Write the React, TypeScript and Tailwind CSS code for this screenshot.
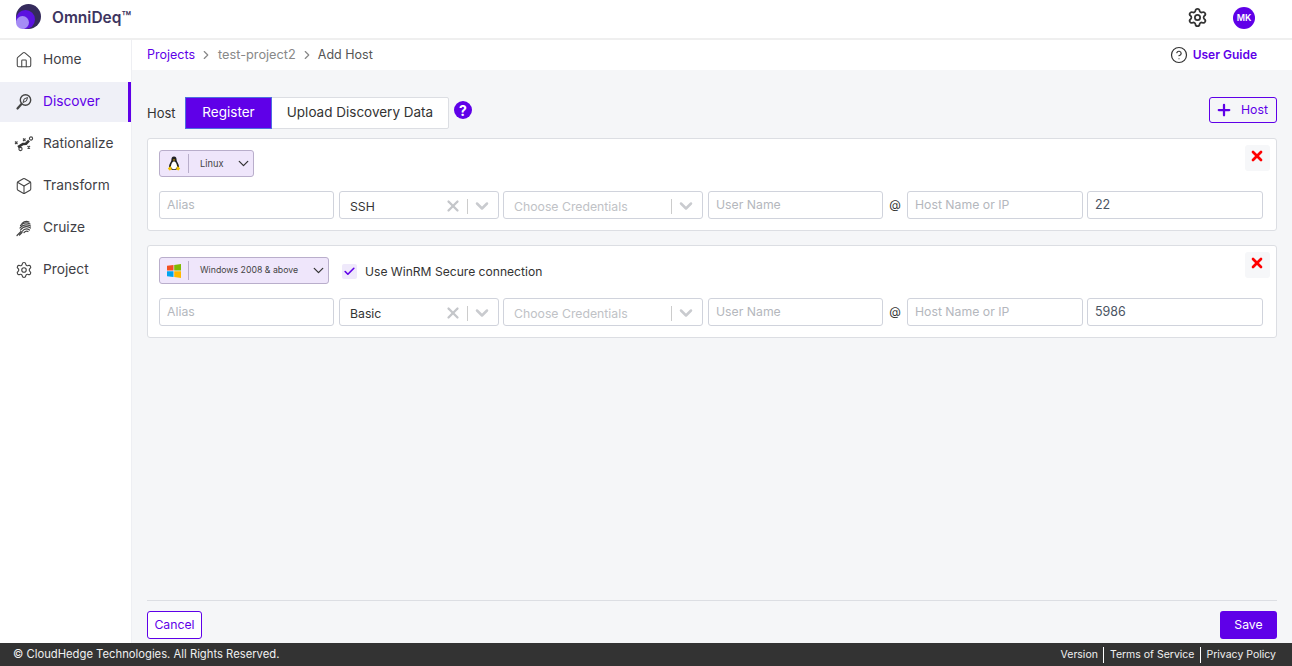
import React from "react";
import { Home, Box, Settings, Check, X, ChevronDown, ChevronRight, Plus, CircleHelp } from "lucide-react";

const font = "font-['Inter','Noto_Sans',sans-serif]";

function DiscoverIcon() {
  return (
    <svg width="18" height="18" viewBox="0 0 18 18" fill="none" stroke="#444" strokeWidth="1.4">
      <circle cx="10.500" cy="7" r="5.200" />
      <path d="M8 9.500l3.400-1.600 1.200-3.400-3.400 1.400z" strokeWidth="1" />
      <path d="M6.500 11L2.500 15.500" strokeWidth="2.200" strokeLinecap="round" />
    </svg>
  );
}
function RationalizeIcon() {
  return (
    <svg width="20" height="16" viewBox="0 0 20 16" fill="none" stroke="#444" strokeWidth="1.100">
      <path d="M1 5.500l2.500 2.500M3.500 5.500L1 8M9 2.500l2.500 2.500M11.500 2.500L9 5M13.500 10l2.500 2.500M16 10l-2.500 2.500" />
      <circle cx="17" cy="2.500" r="1.600" />
      <circle cx="6.500" cy="13" r="1.600" />
      <path d="M4 11.200L9 8l3-.3 3-3" stroke="#333" strokeWidth="2.600" />
    </svg>
  );
}
function CruizeIcon() {
  return (
    <svg width="18" height="18" viewBox="0 0 18 18" fill="none" stroke="#444" strokeWidth="1.200" strokeLinecap="round">
      <path d="M7 4.500C9 2.500 12 2 14 3" />
      <path d="M5.500 6.500C8 4 12 3.500 15 5" />
      <path d="M5 9C7 6 11.500 5 15.500 7" />
      <path d="M5.500 11C8 7.800 12 7 15.500 9" />
      <path d="M7 12.500C9 10 12 9.300 14.500 11" />
      <path d="M9 13.500C10.500 12 12 11.800 13 12.500" />
      <path d="M2 16.500l4-4M4.500 16l2.500-2.500" />
    </svg>
  );
}
function TuxIcon() {
  return (
    <svg width="14" height="15" viewBox="0 0 14 15">
      <path d="M7 .5C5 .5 4.300 2.200 4.400 4.200 4.300 5.800 2 7.800 2 10.500c0 1.800 1.500 3.500 5 3.500s5-1.700 5-3.500c0-2.700-2.300-4.700-2.400-6.300C9.700 2.200 9 .5 7 .5z" fill="#222" />
      <path d="M7 5.500c-1.800 0-3 2.800-3 4.800s1.300 3 3 3 3-1 3-3-1.200-4.800-3-4.800z" fill="#fff" />
      <path d="M5.800 3.600h2.400L7 5z" fill="#eab308" />
      <path d="M.8 12.500L3.500 10l1.500 3.500-2.500 1zM13.200 12.500L10.500 10 9 13.500l2.500 1z" fill="#f5c400" />
    </svg>
  );
}
function WinIcon() {
  return (
    <svg width="14" height="14" viewBox="0 0 14 14">
      <path d="M0 1.800L6.500 1v5.600H0z" fill="#f25022" />
      <path d="M7.200 .9L14 0v6.600H7.200z" fill="#7fba00" />
      <path d="M0 7.300h6.500V13L0 12.200z" fill="#00a4ef" />
      <path d="M7.200 7.300H14V14l-6.800-.9z" fill="#ffb900" />
    </svg>
  );
}

const nav = [
  { label: "Home", icon: <Home size={18} strokeWidth={1.4} color="#444" /> },
  { label: "Discover", icon: <DiscoverIcon />, active: true },
  { label: "Rationalize", icon: <RationalizeIcon /> },
  { label: "Transform", icon: <Box size={18} strokeWidth={1.4} color="#444" /> },
  { label: "Cruize", icon: <CruizeIcon /> },
  { label: "Project", icon: <Settings size={18} strokeWidth={1.5} color="#444" /> },
];

function Text({ ph, value, w }: { ph?: string; value?: string; w: string }) {
  return (
    <div className={`${w} h-7 rounded-[3px] border border-[#d0d3dc] bg-white px-[7px] flex items-center text-[12.250px] ${value ? "text-[#4b5563] text-[12.500px]" : "text-[#b4b7bd]"}`}>
      <span>{value ?? ph}</span>
    </div>
  );
}

function Sel({ value, ph, clear, w }: { value?: string; ph?: string; clear?: boolean; w: string }) {
  return (
    <div className={`${w} h-7 rounded-[3px] border border-[#d0d3dc] bg-white flex items-center pl-[10px] text-[12.250px]`}>
      <span className={`flex-1 pt-1 ${value ? "text-[#333]" : "text-[#c0c2c6]"}`}>{value ?? ph}</span>
      {clear && <X size={18} strokeWidth={3} color="#c4c6ca" className="mr-[5px] mt-0.5" />}
      <div className="w-px h-[15px] bg-[#ccc] mt-0.5" />
      <ChevronDown size={20} strokeWidth={3} color="#c9cbcf" className="ml-[4px] mr-[6px] mt-0.5" />
    </div>
  );
}

function Row({ type, port }: { type: string; port: string }) {
  return (
    <div className="flex items-center mt-[14px]">
      <Text ph="Alias" w="w-[175px]" />
      <div className="w-[5px]" />
      <Sel value={type} clear w="w-[160px]" />
      <div className="w-1" />
      <Sel ph="Choose Credentials" w="w-[200px]" />
      <div className="w-[5px]" />
      <Text ph="User Name" w="w-[175px]" />
      <div className="w-[24px] text-center text-[12px] text-[#333]">@</div>
      <Text ph="Host Name or IP" w="w-[176px]" />
      <div className="w-1" />
      <Text value={port} w="w-[176px]" />
    </div>
  );
}

function RemoveBtn() {
  return (
    <div className="absolute right-[6px] top-[6px] w-[25px] h-[26px] rounded-[3px] bg-[#f6f7f9] flex items-center justify-center pr-px">
      <X size={16} strokeWidth={4} color="#ff0000" className="-mt-[4px]" />
    </div>
  );
}

function OsSel({ icon, label, w, labelW, size }: { icon: React.ReactNode; label: string; w: string; labelW: string; size: string }) {
  return (
    <div className={`${w} h-[27px] rounded-[3px] border border-[#b9aecb] bg-[#efe6fb] flex items-center`}>
      <div className="w-[29px] h-[19px] border-r border-[#b9aecb] flex items-center justify-center shrink-0">{icon}</div>
      <div className={`${labelW} ${size} pl-[11px] text-[#444] whitespace-nowrap`}>{label}</div>
      <ChevronDown size={17} strokeWidth={1.800} color="#333" className="shrink-0" />
    </div>
  );
}

export default function App() {
  return (
    <div className={`${font} w-[1292px] h-[666px] overflow-hidden flex flex-col bg-white`}>
      <header className="h-10 shrink-0 flex items-center border-b-2 border-[#efefef] pl-4 pr-[37px]">
        <svg width="25" height="25" viewBox="0 0 25 25" className="-mt-[5px]">
          <circle cx="12.500" cy="12.500" r="12.500" fill="#352b5c" />
          <circle cx="9.500" cy="15.500" r="9.500" fill="#5b12e0" />
          <circle cx="6.500" cy="18.500" r="6.500" fill="#a58cf5" />
        </svg>
        <span className="ml-[11px] text-[15.500px] font-semibold text-[#3d3560] -mt-[2px]">OmniDeq™</span>
        <div className="flex-1" />
        <Settings size={21} strokeWidth={2} color="#333" className="-mt-[4px]" />
        <div className="ml-[25px] w-[22px] h-[22px] rounded-full bg-[#5f00e8] text-white text-[9px] font-semibold flex items-center justify-center -mt-[2px]">MK</div>
      </header>

      <div className="flex-1 flex min-h-0">
        <aside className="w-[132px] shrink-0 border-r border-[#eeeff3] bg-white">
          {nav.map((n) => (
            <div key={n.label} className={`h-10 mb-0.5 flex items-center pl-[14px] ${n.active ? "bg-[#eff0f7] border-r-[3px] border-[#5f00e8] text-[#5f00e8]" : "text-[#3f3f46]"}`}>
              <span className="w-[20px] flex justify-center shrink-0">{n.icon}</span>
              <span className="ml-[9px] text-[13.750px] -mt-0.5">{n.label}</span>
            </div>
          ))}
        </aside>

        <main className="flex-1 min-w-0 flex flex-col bg-[#f5f6f8]">
          <div className="h-[30px] shrink-0 bg-white flex items-center pl-[15px] pr-[35px] text-[12.500px]">
            <span className="text-[#5f00e8]">Projects</span>
            <ChevronRight size={14} strokeWidth={2} color="#888" className="ml-1 mr-[5px]" />
            <span className="text-[#888] text-[12.750px]">test-project2</span>
            <ChevronRight size={14} strokeWidth={2} color="#888" className="ml-1 mr-[4px]" />
            <span className="text-[#555]">Add Host</span>
            <div className="flex-1" />
            <CircleHelp size={18} strokeWidth={1.600} color="#333" />
            <span className="ml-[5px] text-[#5f00e8] font-semibold text-[12px]">User Guide</span>
          </div>

          <div className="flex-1 flex flex-col px-[15px] pt-[27px] min-h-0">
            <div className="flex items-start h-[41px]">
              <span className="w-[38px] text-[13px] text-[#333] mt-[7px]">Host</span>
              <div className="flex h-8 rounded-[2px] border border-[#dcdee3] bg-white text-[13.500px]">
                <div className="w-[87px] -ml-px -my-px pb-0.5 bg-[#5f00e8] text-white border border-[#4d6fe0] flex items-center justify-center">Register</div>
                <div className="w-[176px] pb-0.5 text-[#333] flex items-center justify-center">Upload Discovery Data</div>
              </div>
              <div className="ml-[5px] mt-[4px] w-[18px] h-[18px] rounded-full bg-[#5f00e8] text-white text-[14px] font-bold flex items-center justify-center">?</div>
              <div className="flex-1" />
              <div className="w-[68px] h-[26px] rounded-[3px] border border-[#5f00e8] flex items-center pl-[5px] text-[#5f00e8] text-[12.250px]">
                <Plus size={18} strokeWidth={3} />
                <span className="ml-[8px]">Host</span>
              </div>
            </div>

            <div className="relative h-[93px] rounded-[3px] border border-[#dcdee3] bg-white px-[11px] pt-[11px]">
              <RemoveBtn />
              <OsSel icon={<TuxIcon />} label="Linux" w="w-[95px]" labelW="w-[46px]" size="text-[9.250px]" />
              <Row type="SSH" port="22" />
            </div>

            <div className="relative h-[93px] mt-[14px] rounded-[3px] border border-[#dcdee3] bg-white px-[11px] pt-[11px]">
              <RemoveBtn />
              <div className="flex items-center">
                <OsSel icon={<WinIcon />} label="Windows 2008 & above" w="w-[170px]" labelW="w-[121px]" size="text-[8.750px]" />
                <div className="ml-[13px] mt-0.5 w-[15px] h-[15px] rounded-[2px] bg-[#efe9fb] flex items-center justify-center">
                  <Check size={13} strokeWidth={3} color="#5f00e8" />
                </div>
                <span className="ml-2 mt-1 text-[12.100px] text-[#333]">Use WinRM Secure connection</span>
              </div>
              <Row type="Basic" port="5986" />
            </div>

            <div className="flex-1" />
            <div className="h-px bg-[#dcdee3]" />
            <div className="h-[42px] flex items-start pt-[10px] justify-between text-[12.250px]">
              <div className="w-[55px] h-7 rounded-[3px] border border-[#5f00e8] bg-white text-[#5f00e8] flex items-center justify-center">Cancel</div>
              <div className="w-[57px] h-7 rounded-[3px] bg-[#5f00e8] text-white flex items-center justify-center">Save</div>
            </div>
          </div>
        </main>
      </div>

      <footer className="h-[23px] shrink-0 bg-[#333] text-[#f0f0f0] flex items-center pl-[13px] pr-[16px] text-[10.500px]">
        <span className="text-[11.250px]">© CloudHedge Technologies. All Rights Reserved.</span>
        <div className="flex-1" />
        <span>Version</span>
        <div className="w-px h-4 bg-white ml-[5px] mr-[6px]" />
        <span>Terms of Service</span>
        <div className="w-px h-4 bg-white ml-[5px] mr-[6px]" />
        <span>Privacy Policy</span>
      </footer>
    </div>
  );
}
